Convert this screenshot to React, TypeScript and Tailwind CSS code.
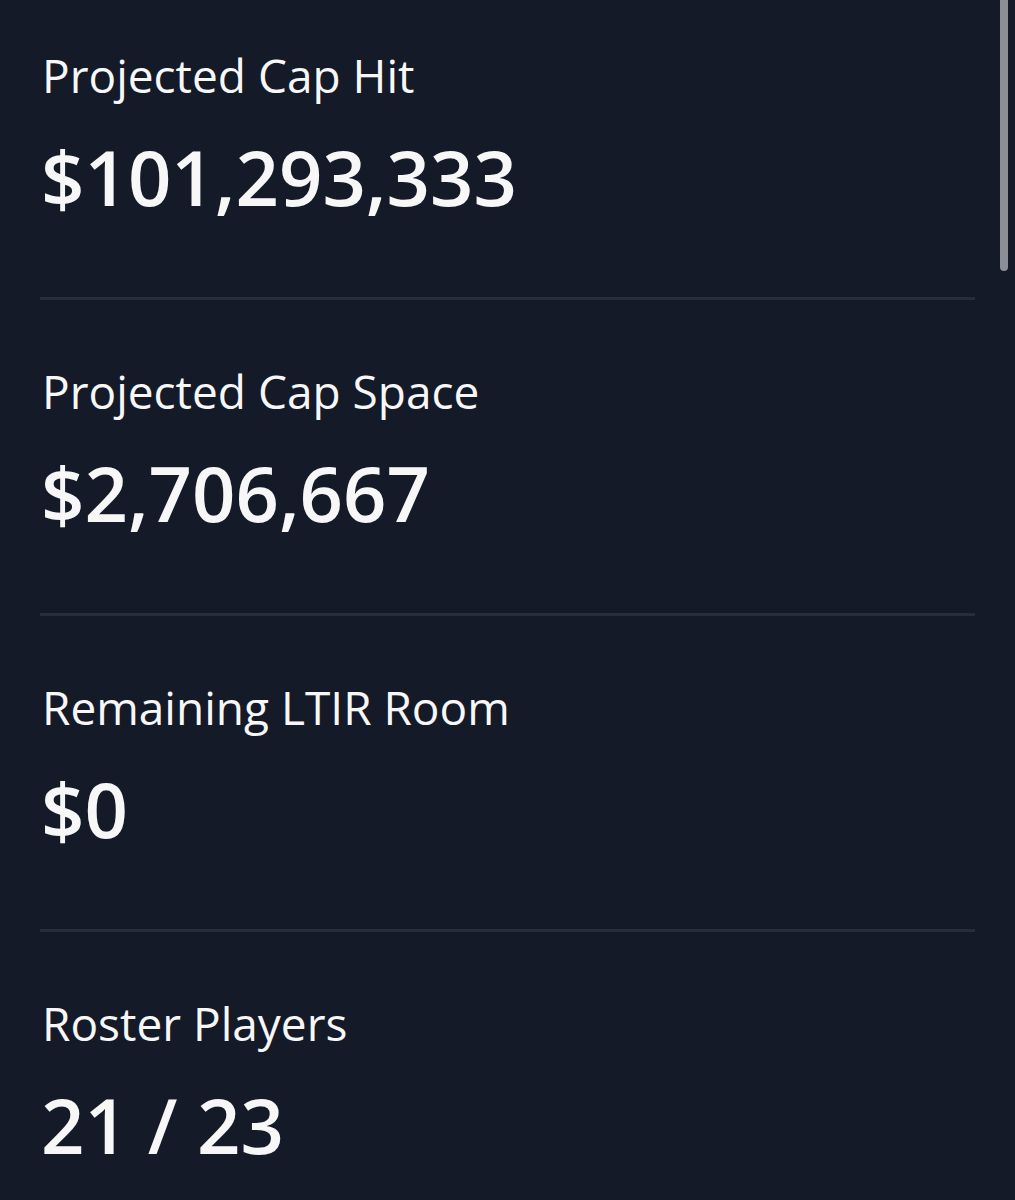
import React from 'react';

const stats = [
  { label: 'Projected Cap Hit', value: '$101,293,333' },
  { label: 'Projected Cap Space', value: '$2,706,667' },
  { label: 'Remaining LTIR Room', value: '$0' },
  { label: 'Roster Players', value: '21 / 23' },
];

export default function App() {
  return (
    <div className="relative w-[1015px] h-[1200px] overflow-hidden bg-[#141a28] text-[#f7f7f8] font-['Open_Sans',sans-serif]">
      {/* content is scrolled slightly */}
      <div className="-mt-[16px] px-[40px]">
        {stats.map((s, i) => (
          <div
            key={s.label}
            className={`pt-[61px] pb-[76px] ${i < stats.length - 1 ? 'border-b-[3px] border-[#272d3a]' : ''}`}
          >
            <div className="pl-[2px] text-[46px] leading-[60px]">{s.label}</div>
            <div className="mt-[28px] pl-[1px] text-[76px] leading-[88px] font-semibold">{s.value}</div>
          </div>
        ))}
      </div>
      {/* scrollbar */}
      <div className="absolute right-[7px] top-0 w-[8px] h-[271px] rounded-b-full bg-[#8b8e96]" />
    </div>
  );
}
